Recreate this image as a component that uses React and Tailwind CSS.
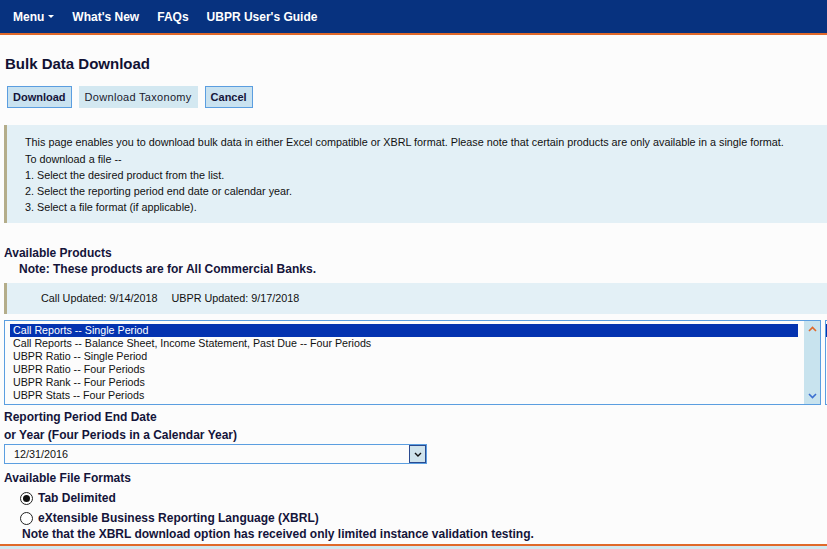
import { useState } from "react";

const products = [
  "Call Reports -- Single Period",
  "Call Reports -- Balance Sheet, Income Statement, Past Due -- Four Periods",
  "UBPR Ratio -- Single Period",
  "UBPR Ratio -- Four Periods",
  "UBPR Rank -- Four Periods",
  "UBPR Stats -- Four Periods",
];

function Radio({ checked, label, onClick }) {
  return (
    <label className="flex items-center gap-[5px] cursor-pointer" onClick={onClick}>
      <span className="w-[13px] h-[13px] rounded-full border border-[#222] bg-white flex items-center justify-center">
        {checked && <span className="w-[7px] h-[7px] rounded-full bg-[#111]" />}
      </span>
      <span className="font-bold">{label}</span>
    </label>
  );
}

export default function App() {
  const [selected, setSelected] = useState(0);
  const [format, setFormat] = useState("tab");

  return (
    <div className="min-h-screen w-[827px] h-[549px] overflow-hidden bg-[#fcfcfc] text-[#14143a] font-['Liberation_Sans',Arial,sans-serif]">
      {/* Top nav */}
      <nav className="h-[35px] bg-[#07327f] border-b-2 border-[#e0692a] flex items-center gap-[18px] px-[13px] text-white font-bold text-[12px]">
        <span className="flex items-center gap-[4px]">
          Menu
          <span className="w-0 h-0 border-x-[3px] border-x-transparent border-t-[3px] border-t-white" />
        </span>
        <span>What's New</span>
        <span>FAQs</span>
        <span>UBPR User's Guide</span>
      </nav>

      <h1 className="mt-[20px] ml-[5px] text-[15px] font-bold leading-[18px] text-[#111133]">Bulk Data Download</h1>

      {/* Buttons */}
      <div className="mt-[13px] ml-[7px] flex gap-[7px] text-[11px]">
        <button className="h-[22px] px-[5px] bg-[#c9e2f0] border border-[#5b9ee0] font-bold text-[#14143a]">Download</button>
        <button className="h-[22px] px-[6px] bg-[#d3e8f1] tracking-[0.3px] text-[#1a1a2e]">Download Taxonomy</button>
        <button className="h-[22px] px-[5px] bg-[#c9e2f0] border border-[#5b9ee0] font-bold text-[#14143a]">Cancel</button>
      </div>

      {/* Instructions */}
      <div className="mt-[17px] ml-[4px] bg-[#e3f0f6] border-l-[3px] border-[#b4ad8a] pl-[18px] pt-[9px] pb-[8px] h-[98px] text-[10.8px] leading-[16px] text-[#111]">
        <p className="mb-[1px]">This page enables you to download bulk data in either Excel compatible or XBRL format. Please note that certain products are only available in a single format.</p>
        <p>To download a file --</p>
        <p>1. Select the desired product from the list.</p>
        <p>2. Select the reporting period end date or calendar year.</p>
        <p>3. Select a file format (if applicable).</p>
      </div>

      {/* Available products */}
      <div className="mt-[22px] ml-[4px] text-[12px] font-bold leading-[16px]">
        <div>Available Products</div>
        <div className="ml-[15px]">Note: These products are for All Commercial Banks.</div>
      </div>

      <div className="mt-[6px] ml-[4px] h-[31px] bg-[#e3f0f6] border-l-[3px] border-[#b4ad8a] pl-[34px] flex items-center gap-[14px] text-[10.8px] text-[#111]">
        <span>Call Updated: 9/14/2018</span>
        <span>UBPR Updated: 9/17/2018</span>
      </div>

      {/* Product list */}
      <div className="mt-[6px] flex gap-[4px]">
        <div className="ml-[4px] w-[817px] h-[85px] shrink-0 border border-[#5b9ee0] bg-[#fcfcfc] flex">
          <ul className="flex-1 pl-[5px] pr-[6px] pt-[3px] text-[10.7px] leading-[13px] text-[#111]">
            {products.map((p, i) => (
              <li
                key={p}
                onClick={() => setSelected(i)}
                className={`pl-[3px] cursor-default ${i === selected ? "bg-[#0433b0] text-white" : ""}`}
              >
                {p}
              </li>
            ))}
          </ul>
          <div className="w-[16px] bg-[#c8e3ee] flex flex-col items-center justify-between py-[5px]">
            <svg width="9" height="6" viewBox="0 0 9 6">
              <path d="M1 5 L4.5 1.5 L8 5" fill="none" stroke="#e0692a" strokeWidth="1.6" />
            </svg>
            <svg width="9" height="6" viewBox="0 0 9 6">
              <path d="M1 1 L4.5 4.5 L8 1" fill="none" stroke="#3b6fd0" strokeWidth="1.6" />
            </svg>
          </div>
        </div>
        <div className="w-[20px] h-[85px] shrink-0 border border-[#5b9ee0] pt-[3px]">
          <div className="h-[13px] bg-[#0433b0]" />
        </div>
      </div>

      {/* Reporting period */}
      <div className="mt-[3px] ml-[4px] text-[12px] font-bold leading-[18px]">
        <div>Reporting Period End Date</div>
        <div>or Year (Four Periods in a Calendar Year)</div>
      </div>
      <div className="ml-[4px] w-[423px] h-[20px] border border-[#5b9ee0] bg-[#fcfcfc] flex items-center justify-between text-[10.8px] text-[#111]">
        <span className="pl-[9px]">12/31/2016</span>
        <span className="w-[17px] h-[18px] bg-[#cfe3ec] border border-[#2a4a90] flex items-center justify-center">
          <svg width="8" height="5" viewBox="0 0 8 5">
            <path d="M1 1 L4 4 L7 1" fill="none" stroke="#111" strokeWidth="1.4" />
          </svg>
        </span>
      </div>

      {/* File formats */}
      <div className="mt-[6px] ml-[4px] text-[12px] leading-[16px]">
        <div className="font-bold">Available File Formats</div>
        <div className="ml-[16px] mt-[4px] flex flex-col gap-[4px]">
          <Radio checked={format === "tab"} label="Tab Delimited" onClick={() => setFormat("tab")} />
          <Radio checked={format === "xbrl"} label="eXtensible Business Reporting Language (XBRL)" onClick={() => setFormat("xbrl")} />
        </div>
        <div className="ml-[18px] font-bold">Note that the XBRL download option has received only limited instance validation testing.</div>
      </div>

      <div className="mt-[2px] border-t-2 border-[#e0692a] bg-[#d2e8f0] h-[20px] pl-[6px] text-[12px] font-bold leading-[18px]">
        Prior Period
      </div>
    </div>
  );
}
